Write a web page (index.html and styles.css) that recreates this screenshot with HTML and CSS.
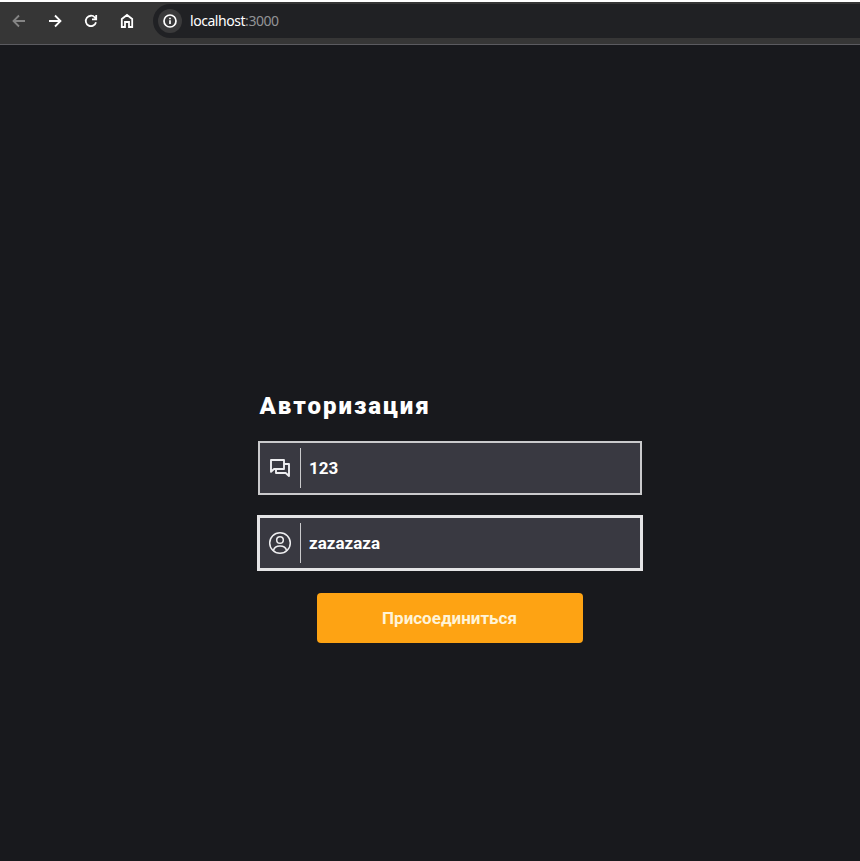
FILE: index.html
```html
<!DOCTYPE html>
<html lang="ru">
<head>
<meta charset="utf-8">
<title>Авторизация</title>
<link rel="stylesheet" href="styles.css">
</head>
<body>
<header class="toolbar">
  <nav class="nav">
    <svg class="nav-icon nav-icon--off" viewBox="0 0 16 16"><path d="M14 8H3M8 2.5 2.5 8 8 13.5"/></svg>
    <svg class="nav-icon" viewBox="0 0 16 16"><path d="M2 8h11M8 2.5 13.5 8 8 13.5"/></svg>
    <svg class="nav-icon" viewBox="0 0 16 16"><path d="M13 9.3A5.2 5.2 0 1 1 11.9 4.5L13 5.7M13.2 2v4.3H9"/></svg>
    <svg class="nav-icon" viewBox="0 0 16 16"><path d="M2.8 14V6L8 2l5.200 4v8H10V9H6v5z"/></svg>
  </nav>
  <div class="address">
    <span class="info"><svg viewBox="0 0 14 14"><circle cx="7" cy="7" r="6"/><path d="M7 6.200V10M7 3.800v1.500"/></svg></span>
    <span class="url">localhost<span class="port">:3000</span></span>
  </div>
</header>
<main class="page">
  <form class="auth">
    <h1 class="title">Авторизация</h1>
    <label class="field">
      <span class="field-icon"><svg class="chat" viewBox="0 0 24 24"><path d="M3 4h13v9H6L3 15.800zM16 8h5v12l-3.300-3H8v-4"/></svg></span>
      <input class="input" type="text" value="123">
    </label>
    <label class="field field--active">
      <span class="field-icon"><svg class="user" viewBox="0 0 24 24"><circle cx="12" cy="12" r="10.300"/><circle cx="12" cy="9" r="3.300"/><path d="M5.500 19.500c.6-3 2.600-4.500 6.500-4.500s5.900 1.500 6.500 4.500"/></svg></span>
      <input class="input" type="text" value="zazazaza">
    </label>
    <button class="submit" type="button">Присоединиться</button>
  </form>
</main>
</body>
</html>
```
FILE: styles.css
```css
* { box-sizing: border-box; }
body {
  display: flex;
  flex-direction: column;
  height: 861px;
  margin: 0;
  overflow: hidden;
  background: #18191d;
  color: #fff;
  font-family: Roboto, sans-serif;
}
svg { display: block; fill: none; stroke: currentColor; }
.toolbar {
  display: flex;
  height: 45px;
  padding-top: 2px;
  border-top: 2px solid #fff;
  border-bottom: 1px solid #5b5b60;
  background: #363636;
}
.nav {
  display: flex;
  gap: 20px;
  width: 153px;
  height: 34px;
  padding-left: 11px;
  align-items: center;
}
.nav-icon { width: 16px; height: 16px; stroke-width: 1.8; }
.nav-icon--off { color: #858585; }
.address {
  display: flex;
  flex: 1;
  gap: 8px;
  align-items: center;
  height: 34px;
  padding-left: 5px;
  border-radius: 17px 0 0 17px;
  background: #202124;
}
.info {
  display: grid;
  place-items: center;
  width: 24px;
  height: 24px;
  border-radius: 50%;
  background: #3a3a3b;
}
.info svg { width: 14px; height: 14px; stroke-width: 1.700; }
.url { font: 14px/20px "Noto Sans", sans-serif; letter-spacing: -0.45px; }
.port { color: #929396; }
.page { display: flex; justify-content: center; padding: 346px 0 0 40px; }
.auth { display: flex; flex-direction: column; width: 384px; }
.title {
  margin: 0 0 20px 1.500px;
  font-size: 24px;
  font-weight: 900;
  line-height: 30px;
  letter-spacing: 2px;
}
.field {
  display: flex;
  align-items: center;
  height: 54px;
  margin-bottom: 20px;
  border: 2px solid #cacacc;
  background: #393941;
}
.field--active { height: 56px; margin: 0 -1px 22px; border: 3px solid #e4e4e6; }
.field-icon {
  display: grid;
  place-items: center;
  width: 41px;
  height: 40px;
  border-right: 1px solid #cacacc;
  color: #eeeef0;
}
.chat { width: 24px; height: 24px; stroke-width: 1.900; stroke-linejoin: round; }
.user { width: 24px; height: 24px; stroke-width: 1.500; }
.input {
  flex: 1;
  min-width: 0;
  padding: 0 8px;
  border: 0;
  outline: 0;
  background: none;
  color: #fff;
  font: 700 17px/20px Roboto, sans-serif;
}
.submit {
  align-self: center;
  width: 266px;
  height: 50px;
  padding: 0 1px 0 0;
  border: 0;
  border-radius: 4px;
  background: #fea313;
  color: #fff4d8;
  font: 700 17px/20px Roboto, sans-serif;
}
```
